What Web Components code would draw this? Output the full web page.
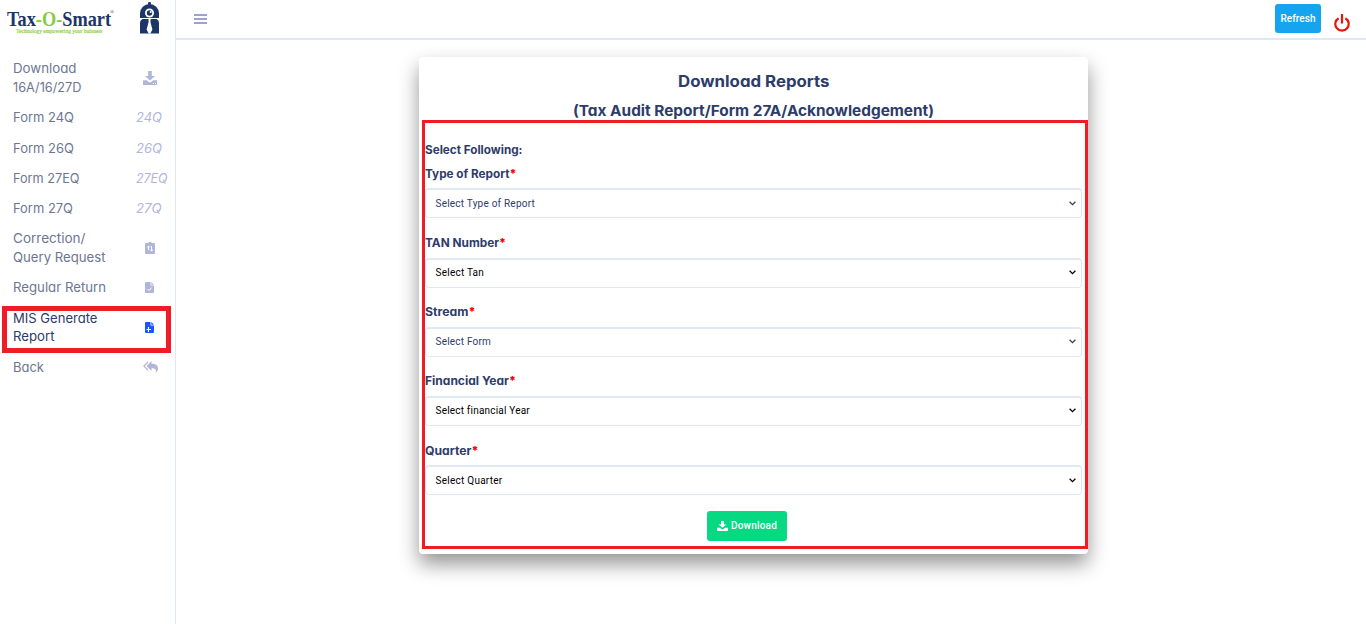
<!DOCTYPE html>
<html lang="en"><head><meta charset="utf-8"><title>Download Reports</title>
<style>
html,body{margin:0;height:100%;background:#fff;overflow:hidden}
body{font-family:Inter,"Open Sans",sans-serif}
</style></head><body>
<app-shell>
  <side-nav slot="side">
    <nav-item><fit-text w="63.5">Download</fit-text><br><fit-text w="68.5">16A/16/27D</fit-text><ui-icon slot="icon" name="download"></ui-icon></nav-item>
    <nav-item><fit-text w="61">Form 24Q</fit-text><fit-text slot="icon" w="26">24Q</fit-text></nav-item>
    <nav-item><fit-text w="61">Form 26Q</fit-text><fit-text slot="icon" w="26">26Q</fit-text></nav-item>
    <nav-item><fit-text w="66.5">Form 27EQ</fit-text><fit-text slot="icon" w="31.5">27EQ</fit-text></nav-item>
    <nav-item><fit-text w="60">Form 27Q</fit-text><fit-text slot="icon" w="25.5">27Q</fit-text></nav-item>
    <nav-item><fit-text w="72.5">Correction/</fit-text><br><fit-text w="92.5">Query Request</fit-text><ui-icon slot="icon" name="query"></ui-icon></nav-item>
    <nav-item><fit-text w="93">Regular Return</fit-text><ui-icon slot="icon" name="filecheck"></ui-icon></nav-item>
    <nav-item active><fit-text w="84.5">MIS Generate</fit-text><br><fit-text w="41.5">Report</fit-text><ui-icon slot="icon" name="fileplus"></ui-icon></nav-item>
    <nav-item><fit-text w="31">Back</fit-text><ui-icon slot="icon" name="reply"></ui-icon></nav-item>
  </side-nav>
  <top-bar slot="top"></top-bar>
  <report-card>
    <form-field><fit-text slot="label" w="84.5">Type of Report</fit-text><fit-text track w="99.5">Select Type of Report</fit-text></form-field>
    <form-field dark><fit-text slot="label" w="74">TAN Number</fit-text><fit-text track w="48.5">Select Tan</fit-text></form-field>
    <form-field><fit-text slot="label" w="43.5">Stream</fit-text><fit-text track w="55.5">Select Form</fit-text></form-field>
    <form-field dark><fit-text slot="label" w="84">Financial Year</fit-text><fit-text track w="94">Select financial Year</fit-text></form-field>
    <form-field dark><fit-text slot="label" w="46.5">Quarter</fit-text><fit-text track w="67">Select Quarter</fit-text></form-field>
  </report-card>
</app-shell>
<script>
const define=(name,html,setup)=>{
  const t=document.createElement('template');t.innerHTML=html;
  customElements.define(name,class extends HTMLElement{
    constructor(){super();this.attachShadow({mode:'open'}).append(t.content.cloneNode(true))}
    connectedCallback(){if(setup)setup(this,this.shadowRoot)}
  });
};
define('app-shell',`<style>
:host{display:grid;grid-template-columns:175px 1fr;height:624px;width:1366px}
aside{border-right:1px solid #dfe9f5;box-sizing:border-box;width:176px}
main{display:flex;flex-direction:column;min-width:0;margin-left:1px}
.content{display:flex;justify-content:center;padding:17px 0 0 0}
</style><aside><slot name="side"></slot></aside><main><slot name="top"></slot><div class="content"><slot></slot></div></main>`);

define('side-nav',`<style>
:host{display:block;position:relative}
header{height:53.7px;display:flex}
.mark{position:absolute;left:2px;top:306px;width:159px;height:37px;border:5px solid #ee1c25}
</style><header><brand-logo></brand-logo></header><nav><slot></slot></nav><div class="mark"></div>`);

define('brand-logo',`<style>:host{display:block}svg{display:block}text{font-family:"Liberation Serif",serif;font-weight:700}</style>
<svg width="175" height="40" viewBox="0 0 175 40">
<text x="7" y="26" font-size="22" fill="#1d3567" textLength="104" lengthAdjust="spacingAndGlyphs">Tax<tspan fill="#86cc3e">-O-</tspan>Smart</text>
<text x="110" y="14" font-size="5.5" fill="#1d3567" style="font-weight:400">®</text>
<text x="16" y="32.600" font-size="5.600" fill="#86cc3e" style="font-weight:400" stroke="#86cc3e" stroke-width=".15" textLength="86.500" lengthAdjust="spacingAndGlyphs">Technology empowering your buisness</text>
<g fill="#1d3567"><rect x="148.400" y="2.500" width="2.200" height="4"/><circle cx="149.500" cy="3.400" r="1.400"/>
<path d="M140 18V13.500a9.500 9.500 0 0 1 19 0V18z"/><path d="M142.500 19h14q2.500 1 2.500 4v10.500h-19V23q0-3 2.500-4z"/></g>
<circle cx="149.500" cy="13" r="4.500" fill="#fff"/><circle cx="149.500" cy="13" r="2.700" fill="#1d3567"/><circle cx="150.700" cy="12" r="1" fill="#fff"/>
<path d="M148.500 19h2.200l-.3 3 2 7.500-2 4h-1.800l-2-4 2-7.500z" fill="#fff"/></svg>`);

define('nav-item',`<style>
:host{display:flex;align-items:center;box-sizing:border-box;padding:5.7px 0 5.7px 12.6px;font-size:13px;line-height:18.85px;color:#6c7693;font-feature-settings:"cv11"}
:host([active]){color:#2c3a67}
.t{width:123px;position:relative}.i{color:#b0b6da;font-style:italic;width:32px;display:flex;align-items:center}
:host([active]) .i{color:#1c54f5}
</style><div class="t"><slot></slot></div><div class="i"><slot name="icon"></slot></div>`);

const icons={
download:[14,14,7.400,'<path d="M5.200 0h3.600v5h3.200L7 9.500 2 5h3.200zM0 9.200h3.800L6 11.300h2l2.200-2.100H14V14H0z"/><path d="M10 12h1v1h-1zM12 12h1v1h-1z" fill="#fff"/>'],
query:[10,12,9.400,'<path d="M1 1h2.300a1.700 1.200 0 0 1 3.400 0H9a1 1 0 0 1 1 1v9a1 1 0 0 1-1 1H1a1 1 0 0 1-1-1V2a1 1 0 0 1 1-1z"/><path d="M3.500 8v-4M2 5.500l1.500-1.500L5 5.500M6.500 4v5M5.200 7.700l1.300 1.300L8 7.700" fill="none" stroke="#fff" stroke-width=".9"/>'],
filecheck:[9,11,9.400,'<path d="M1 0h4.500v3.500H9V10a1 1 0 0 1-1 1H1a1 1 0 0 1-1-1V1a1 1 0 0 1 1-1zM6.300 0 9 2.700H6.300z"/><path d="M2.500 7l1.500 1.500L6.700 5.500" fill="none" stroke="#fff"/>'],
fileplus:[9,11,9.400,'<path d="M1 0h4.500v3.500H9V10a1 1 0 0 1-1 1H1a1 1 0 0 1-1-1V1a1 1 0 0 1 1-1zM6.300 0 9 2.700H6.300z"/><path d="M3.500 5v5M1.500 7.500h4.500" fill="none" stroke="#fff" stroke-width="1.100"/>'],
reply:[15,12,7.400,'<path d="M8.500 0v2.700c4.500 0 6.500 1.800 6.500 4.800 0 2-1 3.500-2.300 4.300.9-3-.2-4.500-4.200-4.600V10L3.600 5z"/><path d="M5 0v1.800L1.800 5 5 8.200V10L0 5z"/>']};
define('ui-icon','',(h,r)=>{
  const [w,ht,m,p]=icons[h.getAttribute('name')];h.style.marginLeft=m+'px';
  r.innerHTML='<style>:host{display:block}svg{display:block}</style><svg width="'+w+'" height="'+ht+'" viewBox="0 0 '+w+' '+ht+'" fill="currentColor">'+p+'</svg>';
});

define('top-bar',`<style>
:host{display:flex;align-items:flex-start;height:38px;border-bottom:2px solid #dfe9f5;padding:0 16px 0 17.5px}
.menu{margin-top:14px;width:13.500px;height:10px;display:flex;flex-direction:column;justify-content:space-between}
.menu i{height:2px;background:#9aa3d1}
button{all:unset;box-sizing:border-box;margin:4px 13px 0 auto;width:46px;height:29px;border-radius:3px;background:#15a5ee;color:#fff;font:500 10px Roboto,sans-serif;text-align:center}
svg{margin-top:14px}
</style><div class="menu"><i></i><i></i><i></i></div><button><fit-text track w="35">Refresh</fit-text></button>
<svg width="16" height="18" viewBox="0 0 16 18" fill="none" stroke="#e8150c" stroke-width="2.200"><path d="M4.600 4.200a6.700 6.700 0 1 0 6.800 0M8 0v9.500"/></svg>`);

define('report-card',`<style>
:host{display:block;position:relative;width:669px;height:497px;margin-right:35px;border-radius:4px;background:#fff;box-shadow:0 10px 20px rgba(0,0,0,.42);color:#2d3c69;font-feature-settings:"cv11"}
h2,h3{margin:0;font-size:16px;line-height:30px;text-align:center;font-weight:700}
h2{padding-top:9px}h3{font-size:15px;line-height:29px}
.form{padding:0 6px}
.lead{font-size:11.500px;font-weight:700;line-height:24px;padding-top:13.150px}
.mark{position:absolute;left:3px;top:63px;width:660px;height:423px;border:3px solid #ee1c25}
button{all:unset;box-sizing:border-box;display:flex;align-items:center;gap:3px;margin:3.200px 0 0 282px;padding-left:10px;width:80px;height:30px;border-radius:3px;background:#06d982;color:#fff;font:500 10px Roboto,sans-serif}
</style><h2><fit-text w="151.500">Download Reports</fit-text></h2><h3><fit-text w="361">(Tax Audit Report/Form 27A/Acknowledgement)</fit-text></h3>
<div class="form"><div class="lead"><fit-text w="97.500">Select Following:</fit-text></div><slot></slot>
<button><svg width="11" height="10" viewBox="0 0 14 14" preserveAspectRatio="none" fill="#fff"><path d="M5.200 0h3.600v5h3.200L7 9.500 2 5h3.200zM0 9.500h3.800L6 11.500h2l2.200-2H14V14H0z"/></svg><fit-text track w="46">Download</fit-text></button></div><div class="mark"></div>`);

define('form-field',`<style>
:host{display:block;height:69.100px}
.l{font-size:11.500px;font-weight:700;line-height:24px;height:26.300px;display:flex}
.l b{color:#f00}
.s{box-sizing:border-box;height:30px;width:657px;border:1px solid #e0e8f3;border-top-width:2px;border-radius:4px;padding:0 5px .6px 9.500px;display:flex;align-items:center;justify-content:space-between;font:400 10px Roboto,sans-serif;color:#2d3c69}
:host([dark]) .s{color:#000}
</style><div class="l"><slot name="label"></slot><b>*</b></div><div class="s"><slot></slot><svg width="7" height="5" viewBox="0 0 7 5" fill="none" stroke="currentColor" stroke-width="1.300"><path d="M.6.8 3.500 3.600 6.400.8"/></svg></div>`);

define('fit-text','<style>:host{display:inline-block;white-space:nowrap;text-align:left}span{display:inline-block;transform-origin:0 50%}</style><span><slot></slot></span>',(h,r)=>{
  const s=r.querySelector('span'),w=+h.getAttribute('w'),n=s.getBoundingClientRect().width;
  if(h.hasAttribute('track'))s.style.letterSpacing=(w-n)/h.textContent.length+'px';
  else{h.style.width=w+'px';s.style.transform='scaleX('+w/n+')'}
});
</script></body></html>
